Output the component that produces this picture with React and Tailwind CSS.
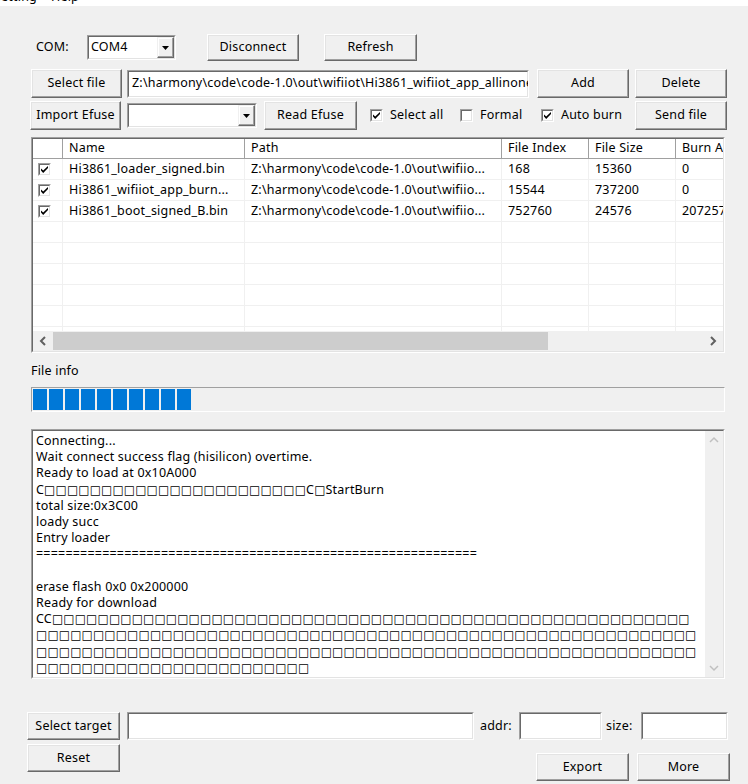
import { useState } from "react";

const FONT = { fontFamily: '"Noto Sans", "Liberation Sans", sans-serif' };
const BOX = { fontFamily: '"DejaVu Sans", sans-serif' };

function Btn({ children, className = "" }) {
    return (
        <div
            className={`flex shrink-0 items-center justify-center bg-[#f0f0f0] border border-t-white border-l-white border-r-[#696969] border-b-[#696969] shadow-[inset_-1px_-1px_0_#a0a0a0,inset_1px_1px_0_#e3e3e3] text-black ${className}`}
        >
            {children}
        </div>
    );
}

function Field({ children, className = "" }) {
    return (
        <div
            className={`shrink-0 overflow-hidden bg-white border border-t-[#a0a0a0] border-l-[#a0a0a0] border-r-white border-b-white ${className}`}
        >
            <div className="h-full w-full border border-t-[#696969] border-l-[#696969] border-r-[#e3e3e3] border-b-[#e3e3e3] flex items-center">
                {children}
            </div>
        </div>
    );
}

function Combo({ value, className = "" }) {
    return (
        <Field className={className}>
            <div className="flex-1 pl-[2px] leading-none whitespace-nowrap">{value}</div>
            <div className="h-full w-[17px] flex items-center justify-center bg-[#f0f0f0] border border-t-[#f0f0f0] border-l-[#f0f0f0] border-r-[#696969] border-b-[#696969] shadow-[inset_-1px_-1px_0_#a0a0a0,inset_1px_1px_0_white]">
                <svg width="7" height="4" viewBox="0 0 7 4">
                    <path d="M0 0H7L3.5 4Z" fill="#000" />
                </svg>
            </div>
        </Field>
    );
}

function Check({ checked = true }) {
    return (
        <div className="w-[13px] h-[13px] shrink-0 bg-white border border-t-[#a0a0a0] border-l-[#a0a0a0] border-r-white border-b-white">
            <div className="w-full h-full border border-t-[#696969] border-l-[#696969] border-r-[#e3e3e3] border-b-[#e3e3e3] flex items-center justify-center">
                {checked && (
                    <svg width="7" height="7" viewBox="0 0 7 7">
                        <path d="M0 2.5L0 4.5L2.2 7L7 2L7 0L2.2 4.6Z" fill="#000" />
                    </svg>
                )}
            </div>
        </div>
    );
}

const cols = [
    { w: "w-[30px]", label: "" },
    { w: "w-[182px]", label: "Name" },
    { w: "w-[257px]", label: "Path" },
    { w: "w-[87px]", label: "File Index" },
    { w: "w-[87px]", label: "File Size" },
    { w: "w-[100px]", label: "Burn Addr" },
];

const files = [
    ["Hi3861_loader_signed.bin", "Z:\\harmony\\code\\code-1.0\\out\\wifiio...", "168", "15360", "0"],
    ["Hi3861_wifiiot_app_burn...", "Z:\\harmony\\code\\code-1.0\\out\\wifiio...", "15544", "737200", "0"],
    ["Hi3861_boot_signed_B.bin", "Z:\\harmony\\code\\code-1.0\\out\\wifiio...", "752760", "24576", "2072576"],
];

// the log prints raw bytes that Windows shows as empty boxes
function Boxes({ n }) {
    return (
        <span style={BOX} className="text-[12px] tracking-[0.05px]">
            {"□".repeat(n)}
        </span>
    );
}

export default function App() {
    const [path] = useState("Z:\\harmony\\code\\code-1.0\\out\\wifiiot\\Hi3861_wifiiot_app_allinone.bin");

    const log = [
        "Connecting...",
        "Wait connect success flag (hisilicon) overtime.",
        "Ready to load at 0x10A000",
        null,
        "total size:0x3C00",
        "loady succ",
        "Entry loader",
        "=".repeat(60),
        "\u00a0",
        "erase flash 0x0 0x200000",
        "Ready for download",
    ];

    return (
        <div
            className="w-[748px] h-[784px] overflow-hidden bg-[#f0f0f0] text-black flex flex-col text-[12.5px] tracking-[0.2px]"
            style={FONT}
        >
            {/* menu bar, mostly cut off */}
            <div className="h-[6px] bg-white overflow-hidden shrink-0">
                <div className="flex gap-[14px] -mt-[11px] -ml-[6px] leading-[15px]">
                    <span>Setting</span>
                    <span>Help</span>
                </div>
            </div>

            {/* COM row */}
            <div className="mt-[28px] h-[27px] flex items-center pl-[36px] shrink-0">
                <div className="w-[51px]">COM:</div>
                <Combo value="COM4" className="w-[89px] h-[25px]" />
                <Btn className="ml-[31px] w-[92px] h-[27px]">Disconnect</Btn>
                <Btn className="ml-[25px] w-[93px] h-[27px]">Refresh</Btn>
            </div>

            {/* file row */}
            <div className="mt-[8px] h-[29px] flex items-center pl-[31px] shrink-0">
                <Btn className="w-[91px] h-[29px]">Select file</Btn>
                <Field className="ml-[5px] w-[402px] h-[28px]">
                    <div className="pl-[3px] whitespace-nowrap">{path}</div>
                </Field>
                <Btn className="ml-[8px] w-[92px] h-[29px]">Add</Btn>
                <Btn className="ml-[6px] w-[92px] h-[29px]">Delete</Btn>
            </div>

            {/* efuse row */}
            <div className="mt-[3px] h-[29px] flex items-center pl-[30px] shrink-0">
                <Btn className="w-[91px] h-[29px]">Import Efuse</Btn>
                <Combo value="" className="ml-[6px] w-[130px] h-[25px]" />
                <Btn className="ml-[7px] w-[93px] h-[29px]">Read Efuse</Btn>
                <div className="ml-[13px] w-[90px] flex items-center gap-[7px]">
                    <Check />
                    <span>Select all</span>
                </div>
                <div className="w-[81px] flex items-center gap-[7px]">
                    <Check checked={false} />
                    <span>Formal</span>
                </div>
                <div className="w-[94px] flex items-center gap-[7px]">
                    <Check />
                    <span>Auto burn</span>
                </div>
                <Btn className="w-[92px] h-[29px]">Send file</Btn>
            </div>

            {/* file list */}
            <div className="mt-[7px] ml-[31px] w-[694px] h-[216px] shrink-0 border border-t-[#a0a0a0] border-l-[#a0a0a0] border-r-white border-b-white">
                <div className="w-full h-full flex flex-col bg-white border border-t-[#696969] border-l-[#696969] border-r-[#e3e3e3] border-b-[#e3e3e3] overflow-hidden">
                    <div className="h-[20px] flex shrink-0 bg-white">
                        {cols.map((c, i) => (
                            <div
                                key={i}
                                className={`${c.w} shrink-0 h-full px-[6px] flex items-center whitespace-nowrap overflow-hidden border-r border-b border-r-[#a0a0a0] border-b-[#a0a0a0] shadow-[inset_1px_1px_0_white]`}
                            >
                                {c.label}
                            </div>
                        ))}
                    </div>
                    <div className="flex-1 overflow-hidden">
                        {Array.from({ length: 9 }).map((_, r) => {
                            const f = files[r];
                            return (
                                <div key={r} className="h-[21px] flex">
                                    <div className="w-[30px] shrink-0 border-r border-b border-[#f0f0f0] flex items-center pl-[5px]">
                                        {f && <Check />}
                                    </div>
                                    {[1, 2, 3, 4, 5].map((ci) => (
                                        <div
                                            key={ci}
                                            className={`${cols[ci].w} shrink-0 border-r border-b border-[#f0f0f0] px-[6px] flex items-center whitespace-nowrap overflow-hidden`}
                                        >
                                            {f ? f[ci - 1] : ""}
                                        </div>
                                    ))}
                                </div>
                            );
                        })}
                    </div>
                    <div className="h-[20px] shrink-0 flex bg-[#f0f0f0]">
                        <div className="w-[20px] flex items-center justify-center">
                            <svg width="8" height="10" viewBox="0 0 8 10">
                                <path d="M6 1L2 5L6 9" stroke="#606060" strokeWidth="2" fill="none" />
                            </svg>
                        </div>
                        <div className="w-[495px] my-[1px] bg-[#cdcdcd]" />
                        <div className="flex-1" />
                        <div className="w-[20px] flex items-center justify-center">
                            <svg width="8" height="10" viewBox="0 0 8 10">
                                <path d="M2 1L6 5L2 9" stroke="#606060" strokeWidth="2" fill="none" />
                            </svg>
                        </div>
                    </div>
                </div>
            </div>

            {/* file info */}
            <div className="mt-[10px] ml-[31px] h-[16px] leading-[16px] shrink-0">File info</div>
            <div className="mt-[8px] ml-[31px] w-[694px] h-[25px] shrink-0 border border-t-[#a0a0a0] border-l-[#a0a0a0] border-r-white border-b-white">
                <div className="h-full flex gap-[2px] p-[1px] bg-[#f0f0f0]">
                    {Array.from({ length: 10 }).map((_, i) => (
                        <div key={i} className="w-[14px] h-full bg-[#0078d7]" />
                    ))}
                </div>
            </div>

            {/* log */}
            <div className="mt-[17px] ml-[31px] w-[694px] h-[250px] shrink-0 border border-t-[#a0a0a0] border-l-[#a0a0a0] border-r-white border-b-white">
                <div className="w-full h-full flex bg-white border border-t-[#696969] border-l-[#696969] border-r-[#e3e3e3] border-b-[#e3e3e3] overflow-hidden">
                    <div className="flex-1 pl-[3px] pt-[2px] leading-[16.2px] whitespace-nowrap overflow-hidden">
                        {log.map((l, i) =>
                            l === null ? (
                                <div key={i}>
                                    C<Boxes n={23} />C<Boxes n={1} />StartBurn
                                </div>
                            ) : (
                                <div key={i}>{l}</div>
                            )
                        )}
                        <div>
                            CC<Boxes n={56} />
                        </div>
                        <div>
                            <Boxes n={58} />
                        </div>
                        <div>
                            <Boxes n={58} />
                        </div>
                        <div>
                            <Boxes n={24} />
                        </div>
                    </div>
                    <div className="w-[18px] shrink-0 bg-[#f0f0f0] flex flex-col justify-between items-center py-[5px]">
                        <svg width="10" height="7" viewBox="0 0 10 7">
                            <path d="M1 6L5 2L9 6" stroke="#c0c0c0" strokeWidth="1.5" fill="none" />
                        </svg>
                        <svg width="10" height="7" viewBox="0 0 10 7">
                            <path d="M1 1L5 5L9 1" stroke="#c0c0c0" strokeWidth="1.5" fill="none" />
                        </svg>
                    </div>
                </div>
            </div>

            {/* target row */}
            <div className="mt-[33px] h-[28px] flex items-center pl-[27px] shrink-0">
                <Btn className="w-[93px] h-[28px]">Select target</Btn>
                <Field className="ml-[7px] w-[347px] h-[28px]" />
                <div className="ml-[6px] w-[39px]">addr:</div>
                <Field className="w-[83px] h-[28px]" />
                <div className="ml-[4px] w-[35px]">size:</div>
                <Field className="w-[87px] h-[28px]" />
            </div>
            <div className="mt-[4px] flex items-start pl-[27px] shrink-0">
                <Btn className="w-[93px] h-[28px]">Reset</Btn>
                <Btn className="mt-[9px] ml-[416px] w-[93px] h-[28px]">Export</Btn>
                <Btn className="mt-[9px] ml-[8px] w-[93px] h-[28px]">More</Btn>
            </div>
        </div>
    );
}
